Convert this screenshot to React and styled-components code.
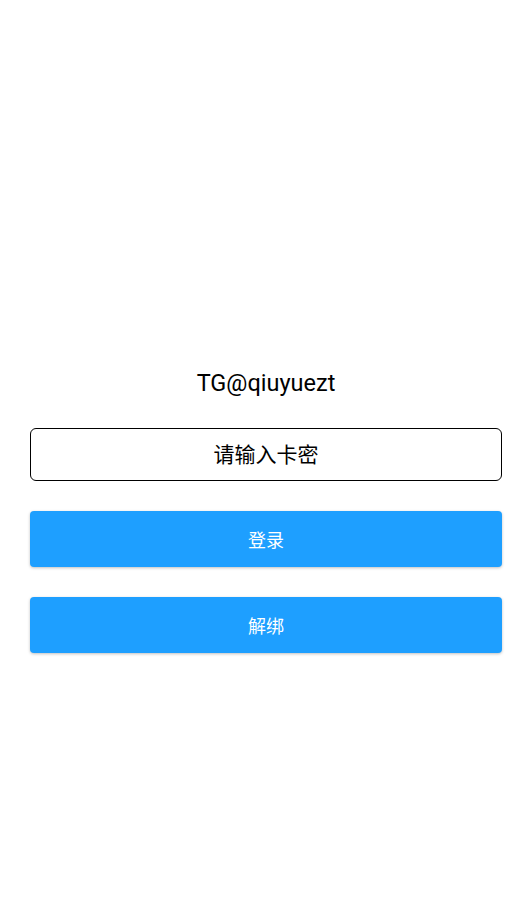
import React, { useState } from 'react';
import styled, { createGlobalStyle } from 'styled-components';

const GlobalStyle = createGlobalStyle`
  html, body {
    margin: 0;
    padding: 0;
    background: #fff;
  }
  body {
    font-family: Roboto, "Noto Sans CJK SC", sans-serif;
  }
`;

const Page = styled.div`
  min-height: 905px;
  box-sizing: border-box;
  padding: 368px 30px 0;
  display: flex;
  flex-direction: column;
  gap: 30px;
`;

const Title = styled.div`
  height: 30px;
  line-height: 30px;
  text-align: center;
  font-size: 23.5px;
  color: #000;
`;

const KeyInput = styled.input`
  box-sizing: border-box;
  width: 100%;
  height: 53px;
  border: 1px solid #000;
  border-radius: 6px;
  outline: none;
  text-align: center;
  font-family: Roboto, "Noto Sans CJK SC", sans-serif;
  font-size: 21px;
  color: #000;
  background: #fff;

  &::placeholder {
    color: #000;
    opacity: 1;
  }
`;

const Button = styled.button`
  width: 100%;
  height: 56px;
  border: none;
  border-radius: 4px;
  background: #1e9fff;
  color: #fff;
  font-family: Roboto, "Noto Sans CJK SC", sans-serif;
  font-size: 18px;
  box-shadow: 0 1px 3px rgba(0, 0, 0, 0.25);
  cursor: pointer;
`;

function App () {
  const [key, setKey] = useState('');

  return (
    <>
      <GlobalStyle />
      <Page>
        <Title>TG@qiuyuezt</Title>
        <KeyInput
          value={key}
          placeholder='请输入卡密'
          onChange={(e) => setKey(e.target.value)}
        />
        <Button>登录</Button>
        <Button>解绑</Button>
      </Page>
    </>
  );
}

export default App;
